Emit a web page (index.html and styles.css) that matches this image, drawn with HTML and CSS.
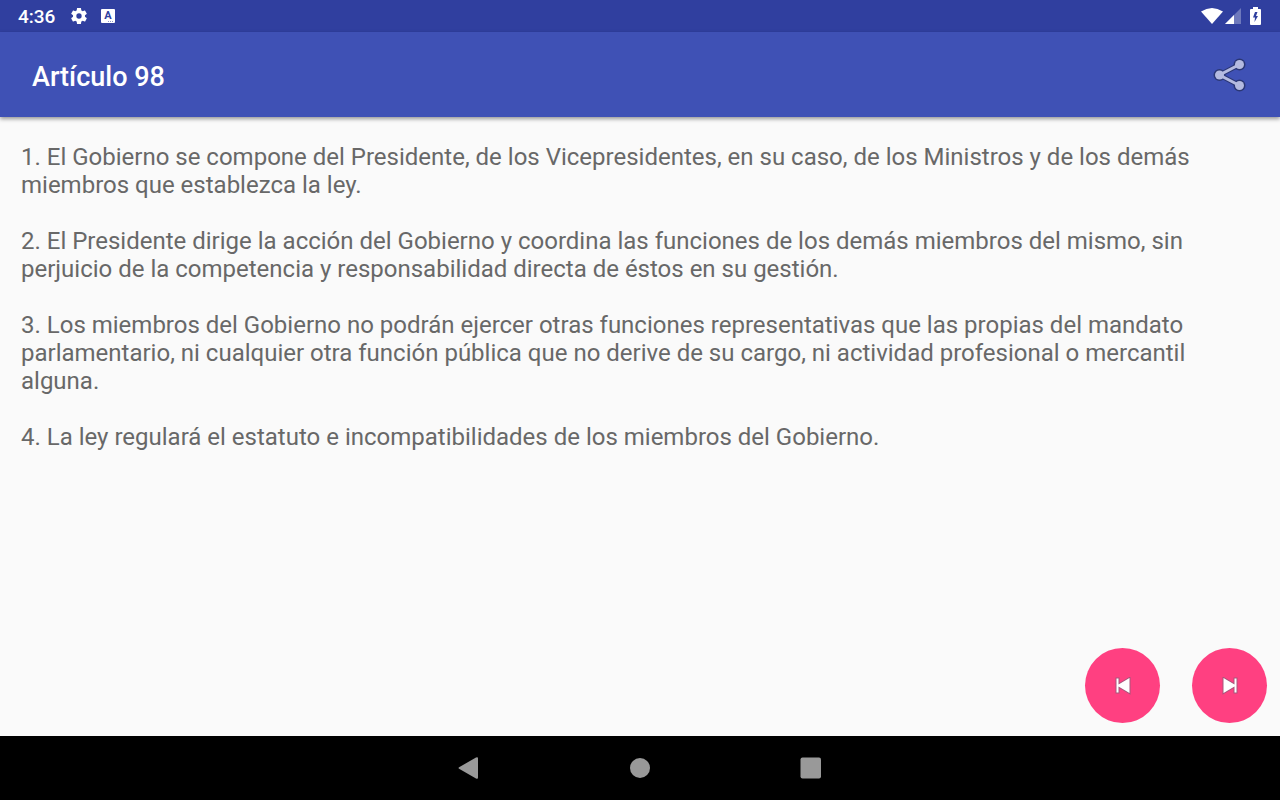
FILE: index.html
```html
<!DOCTYPE html>
<html lang="es">

<head>
    <meta charset="UTF-8">
    <meta name="viewport" content="width=device-width, initial-scale=1.0">
    <title>Artículo 98</title>
    <link rel="stylesheet" href="styles.css">
</head>

<body>
    <div class="status-bar">
        <span class="clock">4:36</span>
        <svg class="status-icon" viewBox="0 0 24 24" width="20" height="20"><path d="M19.14 12.94c.04-.3.06-.61.06-.94 0-.32-.02-.64-.07-.94l2.03-1.58c.18-.14.23-.41.12-.61l-1.92-3.32c-.12-.22-.37-.29-.59-.22l-2.39.96c-.5-.38-1.03-.7-1.62-.94l-.36-2.54c-.04-.24-.24-.41-.48-.41h-3.84c-.24 0-.43.17-.47.41l-.36 2.54c-.59.24-1.13.57-1.62.94l-2.39-.96c-.22-.08-.47 0-.59.22L2.74 8.87c-.12.21-.08.47.12.61l2.03 1.58c-.05.3-.09.63-.09.94s.02.64.07.94l-2.03 1.58c-.18.14-.23.41-.12.61l1.92 3.32c.12.22.37.29.59.22l2.39-.96c.5.38 1.03.7 1.62.94l.36 2.54c.05.24.24.41.48.41h3.84c.24 0 .44-.17.47-.41l.36-2.54c.59-.24 1.13-.56 1.62-.94l2.39.96c.22.08.47 0 .59-.22l1.92-3.32c.12-.22.07-.47-.12-.61l-2.01-1.58zM12 15.2a3.2 3.2 0 1 1 0-6.4 3.2 3.2 0 0 1 0 6.4z"/></svg>
        <svg class="status-icon letter-icon" viewBox="0 0 14 14" width="14" height="14">
            <rect width="14" height="14" rx="1"/>
            <text x="7" y="10" text-anchor="middle">A</text>
            <path class="dots" d="M7 12h1v1H7zM9 12h1v1H9zM11 12h1v1h-1z"/>
        </svg>
        <div class="status-right">
            <svg viewBox="0 0 22 16" width="22" height="16"><path d="M0 3.5Q11-3.5 22 3.5L11 16z"/></svg>
            <svg viewBox="0 0 16 16" width="16" height="16"><path opacity=".3" d="M16 0v16H0z"/><path d="M9 7v9H0z"/></svg>
            <svg class="battery" viewBox="0 0 11 18" width="11" height="18"><path fill-rule="evenodd" d="M3 0h5v2h2a1 1 0 0 1 1 1v14a1 1 0 0 1-1 1H1a1 1 0 0 1-1-1V3a1 1 0 0 1 1-1h2zM5 5l-2 5.500h2L4.500 15 8 9H6l1.500-4z"/></svg>
        </div>
    </div>
    <header class="app-bar">
        <h1>Artículo 98</h1>
        <button class="share" aria-label="Compartir">
            <svg viewBox="0 0 36 36" width="36" height="36">
                <g class="share-edge"><path d="M27.5 7.5l-20 10.500 20 10.500"/><circle cx="27.5" cy="7.5" r="4.5"/><circle cx="7.5" cy="18" r="4.5"/><circle cx="27.5" cy="28.5" r="4.5"/></g>
                <path class="share-line" d="M27.5 7.5l-20 10.500 20 10.500"/>
                <circle cx="27.5" cy="7.5" r="4.5"/><circle cx="7.5" cy="18" r="4.5"/><circle cx="27.5" cy="28.5" r="4.5"/>
            </svg>
        </button>
    </header>
    <main class="content">
        <p>1. El Gobierno se compone del Presidente, de los Vicepresidentes, en su caso, de los Ministros y de los demás miembros que establezca la ley.</p>
        <p>2. El Presidente dirige la acción del Gobierno y coordina las funciones de los demás miembros del mismo, sin perjuicio de la competencia y responsabilidad directa de éstos en su gestión.</p>
        <p>3. Los miembros del Gobierno no podrán ejercer otras funciones representativas que las propias del mandato parlamentario, ni cualquier otra función pública que no derive de su cargo, ni actividad profesional o mercantil alguna.</p>
        <p>4. La ley regulará el estatuto e incompatibilidades de los miembros del Gobierno.</p>
    </main>
    <div class="actions">
        <button class="fab" aria-label="Artículo anterior">
            <svg viewBox="0 0 16 18" width="16" height="18"><path d="M1.500 1.500h2v6L14.500 1v15L3.500 9.500v6h-2z"/></svg>
        </button>
        <button class="fab" aria-label="Artículo siguiente">
            <svg viewBox="0 0 16 18" width="16" height="18"><path d="M14.500 1.500h-2v6L1.500 1v15L12.500 9.500v6h2z"/></svg>
        </button>
    </div>
    <nav class="nav-bar">
        <button aria-label="Atrás"><svg viewBox="0 0 22 22" width="22" height="22"><path d="M18 .5q2-1 2 1v19q0 2-2 1L1.500 12q-2-1 0-2z"/></svg></button>
        <button aria-label="Inicio"><svg viewBox="0 0 22 22" width="22" height="22"><circle cx="11" cy="11" r="10"/></svg></button>
        <button aria-label="Recientes"><svg viewBox="0 0 22 22" width="22" height="22"><rect x=".5" y=".5" width="20.5" height="21" rx="2"/></svg></button>
    </nav>
</body>

</html>
```
FILE: styles.css
```css
body {
    margin: 0;
    min-height: 100vh;
    display: flex;
    flex-direction: column;
    background-color: #fafafa;
    font-family: Roboto, sans-serif;
}

button {
    display: flex;
    align-items: center;
    justify-content: center;
    padding: 0;
    border: none;
    background: none;
    cursor: pointer;
}

.status-bar {
    display: flex;
    align-items: center;
    height: 32px;
    padding: 0 19px 0 18px;
    background-color: #303f9f;
    color: white;
    fill: white;
}

.clock {
    margin-right: 14px;
    font-size: 19px;
    font-weight: 500;
}

.status-icon {
    margin-right: 12px;
}

.letter-icon text {
    fill: #303f9f;
    font-size: 11px;
    font-weight: 700;
}

.dots {
    fill: #8c95cb;
}

.status-right {
    display: flex;
    align-items: center;
    gap: 2px;
    margin-left: auto;
}

.battery {
    margin-left: 7px;
}

.app-bar {
    display: flex;
    align-items: center;
    justify-content: space-between;
    height: 85px;
    padding: 0 32px;
    background-color: #3f51b5;
    box-shadow: 0 2px 4px rgba(0, 0, 0, 0.4);
}

h1 {
    margin: 0;
    padding-top: 4px;
    color: white;
    font-size: 27px;
    font-weight: 500;
}

.share svg {
    fill: #b4bae0;
}

.share-edge {
    fill: none;
    stroke: #2b3775;
    stroke-width: 5;
}

.share-edge circle {
    stroke-width: 3;
}

.share-line {
    fill: none;
    stroke: #b4bae0;
    stroke-width: 3;
}

.content {
    flex: 1;
    padding: 26px 21px;
    color: #686868;
    font-size: 24px;
    line-height: 28px;
}

.content p {
    margin: 0 0 28px;
}

.actions {
    display: flex;
    justify-content: flex-end;
    gap: 32px;
    padding: 0 13px 13px;
}

.fab {
    width: 75px;
    height: 75px;
    border-radius: 50%;
    background-color: #ff4081;
    fill: white;
}

.fab path {
    stroke: #a8577c;
    stroke-width: 2;
    paint-order: stroke;
}

.nav-bar {
    display: flex;
    align-items: center;
    justify-content: center;
    gap: 149px;
    height: 64px;
    background-color: black;
    fill: #999;
}
```
